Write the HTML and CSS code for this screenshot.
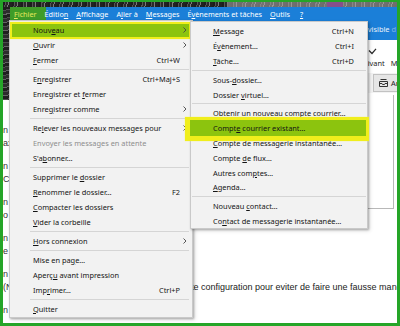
FILE: index.html
```html
<!DOCTYPE html>
<html lang="fr">
<head>
<meta charset="utf-8">
<title>Thunderbird - menu Fichier</title>
<link rel="stylesheet" href="styles.css">
</head>
<body>
<div class="frame">
  <div class="screen">
    <div class="photo-top"></div>
    <div class="body-row">
      <div class="leftstrip">
        <div class="ls-dark"></div>
        <div class="ls-list">
          <div class="ls-entry"><span>n</span><span>ax</span></div>
          <div class="ls-entry"><span>n</span><span>C</span></div>
          <div class="ls-entry"><span>n</span><span>o</span></div>
          <div class="ls-entry"><span>n</span><span>e</span></div>
          <div class="ls-entry"><span>n</span><span>(N</span></div>
          <div class="ls-entry"><span>n</span><span></span></div>
        </div>
      </div>
      <div class="app">
        <nav class="menubar">
          <span class="mb-item active"><u>F</u>ichier</span>
          <span class="mb-item">Éditio<u>n</u></span>
          <span class="mb-item"><u>A</u>ffichage</span>
          <span class="mb-item">A<u>l</u>ler à</span>
          <span class="mb-item"><u>M</u>essages</span>
          <span class="mb-item">É<u>v</u>ènements et tâches</span>
          <span class="mb-item"><u>O</u>utils</span>
          <span class="mb-item"><u>?</u></span>
        </nav>
        <div class="tabbar"><span class="tab-text">visible <span class="fade">d</span></span></div>
        <div class="toolbar">
          <div class="tb-icons">
            <svg class="ico-check" width="9" height="7" viewBox="0 0 9 7"><path d="M1 2.5 L4 5.5 L8 0.8" fill="none" stroke="#2b2b2b" stroke-width="1.2"/></svg>
          </div>
          <div class="tb-labels"><span>Suivant</span><span>Marquer</span></div>
        </div>
        <div class="actionbar">
          <span class="ab-btn">
            <svg width="9" height="8" viewBox="0 0 9 8"><path d="M0.5 2.5 H8.5 V7.5 H0.5 Z M0.5 4.5 H3 L3.5 5.5 H5.5 L6 4.5 H8.5 M1.5 0.5 H7.5" fill="none" stroke="#333" stroke-width="1"/></svg>
            Archiver
          </span>
        </div>
        <div class="content">
          <div class="panel"></div>
          <p class="msg-line">cette configuration pour eviter de faire une fausse manœuvre.</p>
        </div>
      </div>
    </div>

    <div class="menu menu-main">
      <div class="mi hl hl-nouveau"><span class="lb">Nouv<u>e</u>au</span><span class="sc"></span><span class="ar"><svg width="4" height="6" viewBox="0 0 4 6"><path d="M0.5 0.5 L3 3 L0.5 5.5" fill="none" stroke="#444" stroke-width="0.9"/></svg></span></div>
      <div class="mi"><span class="lb"><u>O</u>uvrir</span><span class="sc"></span><span class="ar"><svg width="4" height="6" viewBox="0 0 4 6"><path d="M0.5 0.5 L3 3 L0.5 5.5" fill="none" stroke="#444" stroke-width="0.9"/></svg></span></div>
      <div class="mi"><span class="lb"><u>F</u>ermer</span><span class="sc">Ctrl+W</span><span class="ar"></span></div>
      <div class="sep"></div>
      <div class="mi"><span class="lb">E<u>n</u>registrer</span><span class="sc">Ctrl+Maj+S</span><span class="ar"></span></div>
      <div class="mi"><span class="lb">Enregistrer et <u>f</u>ermer</span><span class="sc"></span><span class="ar"></span></div>
      <div class="mi"><span class="lb">Enre<u>g</u>istrer comme</span><span class="sc"></span><span class="ar"><svg width="4" height="6" viewBox="0 0 4 6"><path d="M0.5 0.5 L3 3 L0.5 5.5" fill="none" stroke="#444" stroke-width="0.9"/></svg></span></div>
      <div class="sep"></div>
      <div class="mi"><span class="lb">Re<u>l</u>ever les nouveaux messages pour</span><span class="sc"></span><span class="ar"><svg width="4" height="6" viewBox="0 0 4 6"><path d="M0.5 0.5 L3 3 L0.5 5.5" fill="none" stroke="#444" stroke-width="0.9"/></svg></span></div>
      <div class="mi disabled"><span class="lb">Envoyer les messa<u>g</u>es en attente</span><span class="sc"></span><span class="ar"></span></div>
      <div class="mi"><span class="lb">S'a<u>b</u>onner…</span><span class="sc"></span><span class="ar"></span></div>
      <div class="sep"></div>
      <div class="mi"><span class="lb">Supprimer le <u>d</u>ossier</span><span class="sc"></span><span class="ar"></span></div>
      <div class="mi"><span class="lb"><u>R</u>enommer le dossier…</span><span class="sc">F2</span><span class="ar"></span></div>
      <div class="mi"><span class="lb"><u>C</u>ompacter les dossiers</span><span class="sc"></span><span class="ar"></span></div>
      <div class="mi"><span class="lb"><u>V</u>ider la corbeille</span><span class="sc"></span><span class="ar"></span></div>
      <div class="sep"></div>
      <div class="mi"><span class="lb"><u>H</u>ors connexion</span><span class="sc"></span><span class="ar"><svg width="4" height="6" viewBox="0 0 4 6"><path d="M0.5 0.5 L3 3 L0.5 5.5" fill="none" stroke="#444" stroke-width="0.9"/></svg></span></div>
      <div class="sep"></div>
      <div class="mi"><span class="lb">Mise en pa<u>g</u>e…</span><span class="sc"></span><span class="ar"></span></div>
      <div class="mi"><span class="lb">Aperç<u>u</u> avant impression</span><span class="sc"></span><span class="ar"></span></div>
      <div class="mi"><span class="lb">Imp<u>r</u>imer…</span><span class="sc">Ctrl+P</span><span class="ar"></span></div>
      <div class="sep"></div>
      <div class="mi"><span class="lb"><u>Q</u>uitter</span><span class="sc"></span><span class="ar"></span></div>
    </div>

    <div class="menu menu-sub">
      <div class="mi"><span class="lb"><u>M</u>essage</span><span class="sc">Ctrl+N</span><span class="ar"></span></div>
      <div class="mi"><span class="lb">É<u>v</u>ènement…</span><span class="sc">Ctrl+I</span><span class="ar"></span></div>
      <div class="mi"><span class="lb"><u>T</u>âche…</span><span class="sc">Ctrl+D</span><span class="ar"></span></div>
      <div class="sep"></div>
      <div class="mi"><span class="lb">Sous-<u>d</u>ossier…</span><span class="sc"></span><span class="ar"></span></div>
      <div class="mi"><span class="lb">Dossier <u>v</u>irtuel…</span><span class="sc"></span><span class="ar"></span></div>
      <div class="sep"></div>
      <div class="mi"><span class="lb">O<u>b</u>tenir un nouveau compte courrier…</span><span class="sc"></span><span class="ar"></span></div>
      <div class="mi hl hl-compte"><span class="lb">Compt<u>e</u> courrier existant…</span><span class="sc"></span><span class="ar"></span></div>
      <div class="mi"><span class="lb"><u>C</u>ompte de messagerie instantanée…</span><span class="sc"></span><span class="ar"></span></div>
      <div class="mi"><span class="lb">Compte <u>d</u>e flux…</span><span class="sc"></span><span class="ar"></span></div>
      <div class="mi"><span class="lb">Autres com<u>p</u>tes…</span><span class="sc"></span><span class="ar"></span></div>
      <div class="mi"><span class="lb"><u>A</u>genda…</span><span class="sc"></span><span class="ar"></span></div>
      <div class="sep"></div>
      <div class="mi"><span class="lb">Nouveau <u>c</u>ontact…</span><span class="sc"></span><span class="ar"></span></div>
      <div class="mi"><span class="lb">Co<u>n</u>tact de messagerie instantanée…</span><span class="sc"></span><span class="ar"></span></div>
    </div>
  </div>
</div>
</body>
</html>
```
FILE: styles.css
```css
* { box-sizing: border-box; margin: 0; padding: 0; }
html, body { width: 400px; height: 326px; overflow: hidden; background: #fff; }
body { font-family: "Noto Sans", "DejaVu Sans", sans-serif; }

.frame {
  width: 400px;
  height: 326px;
  border: 3px solid #25a528;
  border-top-width: 2px;
}
.screen {
  position: relative;
  width: 100%;
  height: 100%;
  display: flex;
  flex-direction: column;
  background: #fff;
  overflow: hidden;
}

/* desktop photo behind the window */
.photo-top {
  height: 5px;
  flex: none;
  background:
    linear-gradient(90deg, transparent 324px, #86508a 324px 340px, transparent 340px),
    linear-gradient(90deg, transparent 0 225px, rgba(175,175,175,.55) 225px),
    repeating-linear-gradient(100deg, #1d1d1d 0 2px, #555 2px 3px, #2a2a2a 3px 5px, #7a7a7a 5px 6px, #222 6px 9px);
}
.body-row { flex: 1; display: flex; min-height: 0; }

.leftstrip {
  width: 7px;
  flex: none;
  display: flex;
  flex-direction: column;
  overflow: hidden;
}
.ls-dark {
  height: 93px;
  flex: none;
  background: repeating-linear-gradient(170deg, #1f1f1f 0 3px, #4d4d4d 3px 4px, #2c2c2c 4px 7px, #666 7px 8px);
}
.ls-list {
  padding-top: 23.5px;
  font: 9px/13px "Liberation Sans", Arial, sans-serif;
  color: #333;
}
.ls-entry { height: 36px; white-space: nowrap; }
.ls-entry span { display: block; height: 13px; }

/* application window */
.app { flex: 1; display: flex; flex-direction: column; min-width: 0; }

.menubar {
  height: 13px;
  flex: none;
  display: flex;
  background: #1b7fd8;
  color: #fff;
  font-size: 7.25px;
  line-height: 14px;
  white-space: nowrap;
}
.mb-item { padding: 0 4px; }
.mb-item.active {
  background: #3f9c28;
  color: #e8e85c;
  padding-right: 9px;
  margin-right: -5px;
}
.mb-item:last-child { padding-left: 6px; }
.mb-item u { text-underline-offset: 1px; }

.tabbar {
  height: 20px;
  flex: none;
  background: #1b7fd8;
  color: #e9f1fb;
  font-size: 7.4px;
  display: flex;
  justify-content: flex-end;
  align-items: center;
  padding: 0 1px 2px 0;
  white-space: nowrap;
}
.fade { opacity: .45; }

.toolbar {
  height: 33px;
  flex: none;
  background: #fff;
  font-size: 7.4px;
  color: #222;
  white-space: nowrap;
  overflow: hidden;
}
.tb-icons { height: 9px; margin-top: 8px; padding-left: 358px; }
.ico-check { display: block; }
.tb-labels { padding-left: 349px; line-height: 12px; display: flex; gap: 6px; }

.actionbar {
  height: 20px;
  flex: none;
  background: #f3f3f3;
  padding: 1px 0 1px 363px;
  display: flex;
  white-space: nowrap;
  overflow: hidden;
}
.ab-btn {
  display: flex;
  align-items: center;
  gap: 3px;
  padding: 0 5px;
  background: #e6e6e6;
  border: 1px solid #c2c2c2;
  font-size: 7.4px;
  color: #222;
}

.content { flex: 1; position: relative; background: #fff; overflow: hidden; }
.panel {
  margin: 2px 3px 0 200px;
  height: 114px;
  border-right: 1px solid #b8b8b8;
  border-bottom: 1px solid #b8b8b8;
}
.msg-line {
  margin-top: 73px;
  padding-left: 169px;
  font: 9px/11px "Liberation Sans", Arial, sans-serif;
  color: #222;
  white-space: nowrap;
}

/* dropdown menus */
.menu {
  position: absolute;
  background: #f2f2f2;
  border: 1px solid #c9c9c9;
  box-shadow: 1px 1px 2px rgba(0,0,0,.28), 2px 2px 4px rgba(0,0,0,.12);
  font-size: 7.4px;
  color: #141414;
  z-index: 5;
}
.menu-main { left: 6px; top: 18px; width: 184px; padding: 1px; }
.menu-sub { left: 187px; top: 19px; width: 178px; padding: 2px 1px 0; z-index: 6; }

.mi {
  position: relative;
  z-index: 0;
  height: 15px;
  display: grid;
  grid-template-columns: 1fr auto 11px;
  align-items: center;
  padding-left: 22px;
  white-space: nowrap;
}
.menu-sub .mi { height: 14.8px; padding-left: 21px; grid-template-columns: 1fr auto 12px; }
.mi u { text-underline-offset: 1px; }
.mi .sc { text-align: right; }
.mi .ar { display: flex; align-items: center; padding-left: 3px; }
.mi .ar svg { display: block; }
.mi.disabled { color: #8e8e8e; }

.sep {
  height: 1px;
  margin: 1.5px 2px 1.5px 19px;
  background: #d5d5d5;
}
.menu-sub .sep { margin: 1.5px 0; }

/* hovered (highlighted) entries */
.hl::before {
  content: "";
  position: absolute;
  z-index: -1;
  background: #8cc40e;
  border: solid #f0ee1c;
  box-shadow: 0 0 1px #f3f05a;
}
.hl-nouveau::before { top: 0; bottom: -2px; left: -1px; right: 0; border-width: 2px; }
.hl-compte::before {
  top: -3.5px; bottom: -5.5px; left: -7px; right: -3px;
  border-width: 3px 3px 5px 5px;
}
```
